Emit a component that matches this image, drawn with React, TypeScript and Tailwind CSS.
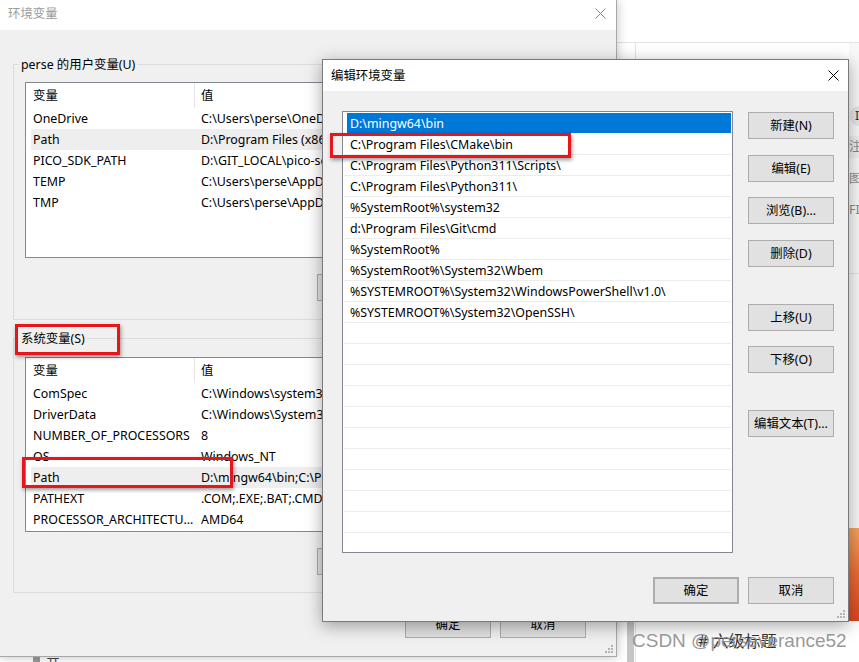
import React from 'react';

type Row = { name: string; value: string; hl?: boolean };

const userVars: Row[] = [
  { name: 'OneDrive', value: 'C:\\Users\\perse\\OneDrive' },
  { name: 'Path', value: 'D:\\Program Files (x86)\\Common Files', hl: true },
  { name: 'PICO_SDK_PATH', value: 'D:\\GIT_LOCAL\\pico-sdk' },
  { name: 'TEMP', value: 'C:\\Users\\perse\\AppData\\Local\\Temp' },
  { name: 'TMP', value: 'C:\\Users\\perse\\AppData\\Local\\Temp' },
];

const sysVars: Row[] = [
  { name: 'ComSpec', value: 'C:\\Windows\\system32\\cmd.exe' },
  { name: 'DriverData', value: 'C:\\Windows\\System32\\Drivers\\DriverData' },
  { name: 'NUMBER_OF_PROCESSORS', value: '8' },
  { name: 'OS', value: 'Windows_NT' },
  { name: 'Path', value: 'D:\\mingw64\\bin;C:\\Program Files\\CMake\\bin;', hl: true },
  { name: 'PATHEXT', value: '.COM;.EXE;.BAT;.CMD;.VBS;.VBE;.JS' },
  { name: 'PROCESSOR_ARCHITECTURE', value: 'AMD64' },
];

const paths = [
  'D:\\mingw64\\bin',
  'C:\\Program Files\\CMake\\bin',
  'C:\\Program Files\\Python311\\Scripts\\',
  'C:\\Program Files\\Python311\\',
  '%SystemRoot%\\system32',
  'd:\\Program Files\\Git\\cmd',
  '%SystemRoot%',
  '%SystemRoot%\\System32\\Wbem',
  '%SYSTEMROOT%\\System32\\WindowsPowerShell\\v1.0\\',
  '%SYSTEMROOT%\\System32\\OpenSSH\\',
];

const CloseX = ({ className }: { className: string }) => (
  <svg width="11" height="11" viewBox="0 0 11 11" className={className}>
    <path d="M0.5 0.5L10.5 10.5M10.5 0.5L0.5 10.5" stroke="currentColor" strokeWidth="1" fill="none" />
  </svg>
);

const Grip = () => (
  <svg width="8" height="8" viewBox="0 0 8 8" className="absolute right-[3px] bottom-[3px]">
    <g fill="#b4b4b4">
      <rect x="6" y="0" width="2" height="2" />
      <rect x="3" y="3" width="2" height="2" />
      <rect x="6" y="3" width="2" height="2" />
      <rect x="0" y="6" width="2" height="2" />
      <rect x="3" y="6" width="2" height="2" />
      <rect x="6" y="6" width="2" height="2" />
    </g>
  </svg>
);

const Btn = ({ label, className = '' }: { label: string; className?: string }) => (
  <div
    className={`w-[86px] h-[27px] shrink-0 flex items-center justify-center bg-[#e1e1e1] border border-[#adadad] text-black whitespace-nowrap ${className}`}
  >
    {label}
  </div>
);

function VarList({ rows, h }: { rows: Row[]; h: string }) {
  return (
    <div className={`bg-white border border-[#828790] overflow-hidden ${h}`}>
      <div className="flex h-[25px] items-center">
        <div className="w-[169px] h-full flex items-center pl-[7px] border-r border-[#e5e5e5]">变量</div>
        <div className="pl-[6px]">值</div>
      </div>
      {rows.map((r) => (
        <div key={r.name} className={`ml-[5px] h-[21px] flex items-center ${r.hl ? 'bg-[#eeeeee]' : ''}`}>
          <div className="w-[170px] shrink-0 pl-[2px] pr-[6px] truncate">{r.name}</div>
          <div className="whitespace-nowrap">{r.value}</div>
        </div>
      ))}
    </div>
  );
}

function Group({
  title,
  rows,
  listH,
  listMt,
  btns,
  pb,
  className = '',
}: {
  title: string;
  rows: Row[];
  listH: string;
  listMt: string;
  btns: string[];
  pb: string;
  className?: string;
}) {
  return (
    <fieldset className={`border border-[#dcdcdc] ${pb} ${className}`}>
      <legend className="ml-[5px] px-[2px] leading-[17px]">{title}</legend>
      <div className={`px-[11px] ${listMt}`}>
        <VarList rows={rows} h={listH} />
        <div className="flex justify-end gap-[8px] mt-[16px]">
          {btns.map((b) => (
            <Btn key={b} label={b} />
          ))}
        </div>
      </div>
    </fieldset>
  );
}

export default function App() {
  return (
    <div className="relative w-[859px] h-[662px] overflow-hidden bg-white text-[12.4px] leading-[17px] text-black font-['Noto_Sans','Noto_Sans_CJK_SC',sans-serif]">
      {/* browser page behind the windows */}
      <div className="absolute left-[617px] top-0 w-[242px] h-[662px] bg-white flex flex-col">
        <div className="h-[43px] shrink-0 border-b border-[#e3e3e3]" />
        <div className="flex flex-1">
          <div className="w-[19px] shrink-0 border-r border-[#e3e3e3] flex flex-col justify-end pl-[10px]">
            <div className="w-[7px] h-[41px] bg-[#c6c6c6]" />
          </div>
          <div className="flex-1 flex flex-col justify-end pb-[11px]">
            <div className="pl-[62px] text-[16px] leading-[20px] text-[#333] whitespace-nowrap"># 六级标题</div>
          </div>
          <div className="w-[10px] shrink-0 bg-[#f8f8f8] flex flex-col overflow-hidden text-[#8a8a8a] whitespace-nowrap">
            <div className="mt-[63px] ml-[1px] h-[20px] rounded-l-full bg-[#e4e6ea] pl-[5px] leading-[20px] text-[#333]">I</div>
            <div className="mt-[10px] h-[22px] bg-[#eceef1] leading-[22px]">注释</div>
            <div className="mt-[12px] h-[18px] leading-[18px]">图片</div>
            <div className="mt-[13px] h-[18px] leading-[18px]">FI</div>
            <div className="mt-[54px] border-t border-[#e3e3e3]" />
            <div className="mt-auto h-[93px] bg-linear-to-b from-[#f2a35e] via-[#e86a34] to-[#d9461f]" />
            <div className="h-[41px] bg-white" />
          </div>
        </div>
      </div>

      {/* strip below the main window */}
      <div className="absolute left-0 top-[657px] w-[617px] h-[5px] flex items-start pl-[33px] gap-[6px] overflow-hidden">
        <div className="w-[7px] h-[5px] bg-[#9a9a9a]" />
        <span className="text-[14px] leading-[14px] text-[#444]">开</span>
      </div>

      {/* 环境变量 window */}
      <div className="absolute left-0 top-0 w-[617px] h-[657px] bg-[#f0f0f0] border-r border-b border-[#a8a8a8] shadow-[0_0_10px_rgba(0,0,0,0.25)] flex flex-col">
        <div className="h-[30px] shrink-0 bg-white flex items-center justify-between pl-[8px] pr-[10px] pb-[4px]">
          <span className="text-[#9b9b9b]">环境变量</span>
          <CloseX className="text-[#8a8a8a]" />
        </div>
        <div className="px-[13px] pt-[26px] flex flex-col">
          <Group
            title="perse 的用户变量(U)"
            rows={userVars}
            listH="h-[176px]"
            listMt="mt-[9px]"
            pb="pb-[18px]"
            btns={['新建(N)...', '编辑(E)...', '删除(D)']}
          />
          <Group
            title="系统变量(S)"
            rows={sysVars}
            listH="h-[175px]"
            listMt="mt-[10px]"
            pb="pb-[17px]"
            className="mt-[10px]"
            btns={['新建(W)...', '编辑(I)...', '删除(L)']}
          />
          <div className="flex justify-end gap-[9px] mt-[18px] pr-[17px]">
            <Btn label="确定" />
            <Btn label="取消" />
          </div>
        </div>
        <Grip />
      </div>

      {/* 编辑环境变量 dialog */}
      <div className="absolute left-[322px] top-[59px] w-[527px] h-[563px] bg-[#f0f0f0] border border-[#7a7a7a] shadow-[0_4px_16px_rgba(0,0,0,0.35)] flex flex-col">
        <div className="h-[31px] shrink-0 bg-white flex items-center justify-between pl-[8px] pr-[9px]">
          <span>编辑环境变量</span>
          <CloseX className="text-black" />
        </div>
        <div className="flex pt-[20px] pl-[19px]">
          <div className="w-[391px] h-[442px] bg-white border border-[#828790] overflow-hidden pt-[1px] px-[1px]">
            {Array.from({ length: 21 }).map((_, i) => {
              const sel = i === 0;
              return (
                <div key={i} className={`h-[21px] border-b ${sel ? 'border-transparent' : 'border-[#ececec]'}`}>
                  <div
                    className={`h-full ml-[3px] pl-[3px] flex items-center whitespace-nowrap ${
                      sel ? 'bg-[#0078d7] text-white' : ''
                    }`}
                  >
                    {paths[i] ?? ''}
                  </div>
                </div>
              );
            })}
          </div>
          <div className="ml-[15px] flex flex-col">
            <Btn label="新建(N)" className="mt-[1px]" />
            <Btn label="编辑(E)" className="mt-[16px]" />
            <Btn label="浏览(B)..." className="mt-[15px]" />
            <Btn label="删除(D)" className="mt-[16px]" />
            <Btn label="上移(U)" className="mt-[37px]" />
            <Btn label="下移(O)" className="mt-[15px]" />
            <Btn label="编辑文本(T)..." className="mt-[37px]" />
          </div>
        </div>
        <div className="flex justify-end gap-[9px] mt-[24px] pr-[14px]">
          <Btn label="确定" className="border-2 border-[#0078d7]" />
          <Btn label="取消" />
        </div>
        <Grip />
      </div>

      {/* red annotation boxes */}
      <div className="absolute left-[15px] top-[324px] w-[105px] h-[31px] border-[3px] border-[#e8161b] shadow-[1px_2px_4px_rgba(0,0,0,0.4)]" />
      <div className="absolute left-[22px] top-[457px] w-[211px] h-[31px] border-[3px] border-[#e8161b] shadow-[1px_2px_4px_rgba(0,0,0,0.4)]" />
      <div className="absolute left-[330px] top-[133px] w-[241px] h-[25px] border-[3px] border-[#e8161b] shadow-[1px_2px_4px_rgba(0,0,0,0.4)]" />

      {/* watermark */}
      <div className="absolute left-[632px] top-[630px] text-[19px] leading-[22px] font-['Liberation_Sans',sans-serif] text-[#8c8c8c]/90 whitespace-nowrap">
        CSDN @perseverance52
      </div>
    </div>
  );
}
